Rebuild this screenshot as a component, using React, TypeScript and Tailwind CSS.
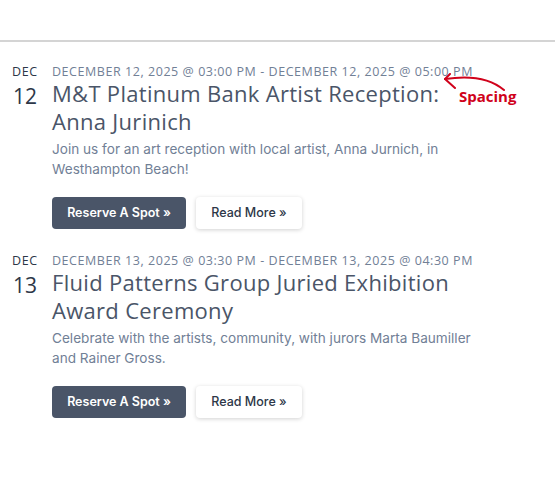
import React from "react";

type EventItem = {
  month: string;
  day: string;
  when: string;
  title: string;
  blurb: string;
};

const events: EventItem[] = [
  {
    month: "DEC",
    day: "12",
    when: "December 12, 2025 @ 03:00 PM - December 12, 2025 @ 05:00 PM",
    title: "M&T Platinum Bank Artist Reception: Anna Jurinich",
    blurb: "Join us for an art reception with local artist, Anna Jurnich, in Westhampton Beach!",
  },
  {
    month: "DEC",
    day: "13",
    when: "December 13, 2025 @ 03:30 PM - December 13, 2025 @ 04:30 PM",
    title: "Fluid Patterns Group Juried Exhibition Award Ceremony",
    blurb: "Celebrate with the artists, community, with jurors Marta Baumiller and Rainer Gross.",
  },
];

function EventRow({ ev, note }: { ev: EventItem; note?: boolean }) {
  return (
    <div className="flex">
      <div className="w-[52px] shrink-0 pl-[12px] font-['Open_Sans',sans-serif] text-[#2d3748]">
        <div className="text-[12.5px] leading-[14px] tracking-[0.6px]">{ev.month}</div>
        <div className="text-[21px] leading-[24px] mt-[5px] pl-[1px]">{ev.day}</div>
      </div>
      <div className="w-[436px] relative">
        <div className="text-[12.5px] leading-[13px] tracking-[0.55px] uppercase text-[#718096] font-['Open_Sans',sans-serif] whitespace-nowrap">
          {ev.when}
        </div>
        <h2 className="mt-[1px] text-[22px] leading-[28px] tracking-[0.3px] text-[#4a5568] font-['Open_Sans',sans-serif] font-medium">
          {ev.title}
        </h2>
        <p className="mt-[4px] text-[13.6px] leading-[20px] text-[#718096] font-['Inter',sans-serif]">
          {ev.blurb}
        </p>
        <div className="flex gap-[10px] mt-[18px]">
          <button className="h-[32px] w-[134px] rounded-[4px] bg-[#4a5568] text-white text-[12.5px] font-semibold font-['Inter',sans-serif]">
            Reserve A Spot »
          </button>
          <button className="h-[32px] w-[106px] rounded-[4px] bg-white text-[#2d3748] text-[12.5px] font-medium font-['Inter',sans-serif] shadow-[0_1px_4px_rgba(0,0,0,0.18)]">
            Read More »
          </button>
        </div>
        {note && (
          <div className="absolute left-[392px] top-[8px] w-[90px] h-[40px]">
            <svg width="64" height="24" viewBox="0 0 64 24" className="absolute left-0 top-0" fill="none" stroke="#d0021b" strokeWidth="2" strokeLinecap="round" strokeLinejoin="round">
              <path d="M60 17 Q40 0 1 6" />
              <path d="M1 6 L6 1 M1 6 L11 15" />
            </svg>
            <span className="absolute left-[15px] top-[13px] text-[15px] leading-[20px] font-bold text-[#d0021b] font-['Open_Sans',sans-serif]">
              Spacing
            </span>
          </div>
        )}
      </div>
    </div>
  );
}

export default function App() {
  return (
    <div className="w-[555px] h-[492px] bg-white overflow-hidden">
      <div className="h-[40px]" />
      <div className="h-[2px] bg-[#d4d4d4]" />
      <div className="pt-[23px] flex flex-col gap-[25px]">
        {events.map((ev, i) => (
          <EventRow key={i} ev={ev} note={i === 0} />
        ))}
      </div>
    </div>
  );
}
